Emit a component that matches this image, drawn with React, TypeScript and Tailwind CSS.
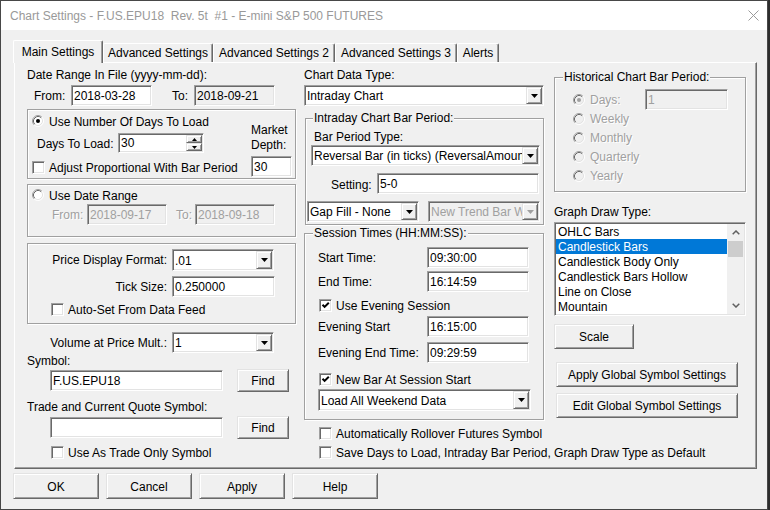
import React from "react";

const sunken =
  "border border-t-[#a0a0a0] border-l-[#a0a0a0] border-r-white border-b-white shadow-[inset_1px_1px_0_#696969,inset_-1px_-1px_0_#e3e3e3]";
const raised =
  "border border-t-[#e3e3e3] border-l-[#e3e3e3] border-r-[#696969] border-b-[#696969] shadow-[inset_1px_1px_0_#fff,inset_-1px_-1px_0_#a0a0a0]";
const disText = "text-[#a0a0a0] [text-shadow:1px_1px_0_#fff]";

function Edit({ cls, value = "", ro = false, dis = false }: { cls: string; value?: string; ro?: boolean; dis?: boolean }) {
  return (
    <div
      className={`${cls} ${sunken} ${ro || dis ? "bg-[#f0f0f0]" : "bg-white"} ${
        dis ? "text-[#a0a0a0]" : "text-black"
      } flex items-center pl-[2px] pt-[1px] whitespace-nowrap overflow-hidden shrink-0`}
    >
      {value}
    </div>
  );
}

function DownArrow({ dis = false }: { dis?: boolean }) {
  return (
    <svg width="7" height="4" viewBox="0 0 7 4">
      <polygon points="0,0 7,0 3.5,4" fill={dis ? "#a0a0a0" : "#000"} />
    </svg>
  );
}

function Combo({ cls, value, dis = false }: { cls: string; value: string; dis?: boolean }) {
  return (
    <div className={`${cls} ${sunken} ${dis ? "bg-[#f0f0f0] text-[#a0a0a0]" : "bg-white text-black"} flex shrink-0 p-[1px]`}>
      <div className="flex-1 flex items-center pl-[1px] pt-[1px] overflow-hidden whitespace-nowrap">{value}</div>
      <div className={`w-[16px] ${raised} bg-[#f0f0f0] flex items-center justify-center shrink-0`}>
        <DownArrow dis={dis} />
      </div>
    </div>
  );
}

function CheckBox({ checked = false, label, cls = "" }: { checked?: boolean; label: string; cls?: string }) {
  return (
    <div className={`flex items-center h-[14px] whitespace-nowrap ${cls}`}>
      <div className={`w-[13px] h-[13px] ${sunken} bg-white shrink-0 flex items-center justify-center`}>
        {checked && (
          <svg width="9" height="9" viewBox="0 0 9 9">
            <path d="M1.5 3.8 L3.6 5.9 L7.8 1.7" stroke="#000" strokeWidth="2" fill="none" />
          </svg>
        )}
      </div>
      <span className="ml-[4px] pt-[1px]">{label}</span>
    </div>
  );
}

function RadioDot({ checked = false, dis = false }: { checked?: boolean; dis?: boolean }) {
  return (
    <svg width="12" height="12" viewBox="0 0 12 12" className="shrink-0">
      <circle cx="6" cy="6" r="5" fill={dis ? "#f0f0f0" : "#fff"} />
      <path d="M2.11 9.89A5.5 5.5 0 0 1 9.89 2.11" stroke="#a0a0a0" fill="none" />
      <path d="M9.89 2.11A5.5 5.5 0 0 1 2.11 9.89" stroke="#fff" fill="none" />
      <path d="M2.82 9.18A4.5 4.5 0 0 1 9.18 2.82" stroke="#696969" fill="none" />
      <path d="M9.18 2.82A4.5 4.5 0 0 1 2.82 9.18" stroke="#e3e3e3" fill="none" />
      {checked && <circle cx="6" cy="6" r="2" fill={dis ? "#a0a0a0" : "#000"} />}
    </svg>
  );
}

function Btn({ cls, label }: { cls: string; label: string }) {
  return (
    <div className={`${cls} ${raised} bg-[#f0f0f0] flex items-center justify-center pt-[1px] shrink-0 whitespace-nowrap`}>{label}</div>
  );
}

function Group({ cls, title, tcls = "left-[7px]", children }: { cls: string; title?: string; tcls?: string; children?: React.ReactNode }) {
  return (
    <div className={`relative shrink-0 border border-[#a0a0a0] shadow-[inset_1px_1px_0_#fff,1px_1px_0_#fff] ${cls}`}>
      {title && (
        <span className={`absolute -top-[8px] ${tcls} bg-[#f0f0f0] px-[1px] leading-[14px] whitespace-nowrap`}>{title}</span>
      )}
      {children}
    </div>
  );
}

function Tab({ label, sel = false, cls }: { label: string; sel?: boolean; cls: string }) {
  return (
    <div
      className={`${cls} ${
        sel ? "h-[23px] -mb-[1px] relative z-10 bg-[#f0f0f0]" : "h-[19px]"
      } border-l border-t border-r border-l-white border-t-white border-r-[#696969] shadow-[inset_-1px_0_0_#a0a0a0] rounded-tl-[2px] rounded-tr-[2px] flex items-center justify-center whitespace-nowrap shrink-0`}
    >
      {label}
    </div>
  );
}

function LeftColumn() {
  return (
    <div className="flex flex-col w-[269px] shrink-0">
      <div className="mt-[5px] leading-[14px]">Date Range In File (yyyy-mm-dd):</div>
      <div className="mt-[3px] flex items-center h-[21px]">
        <span className="ml-[7px] w-[37px]">From:</span>
        <Edit cls="w-[81px] h-[21px]" value="2018-03-28" />
        <span className="ml-[20px] w-[22px]">To:</span>
        <Edit cls="w-[81px] h-[21px]" value="2018-09-21" ro />
      </div>

      <Group cls="mt-[3px] w-[269px] h-[70px] flex">
        <div className="w-[223px] pl-[4px] flex flex-col">
          <div className="mt-[4px] h-[14px] flex items-center">
            <RadioDot checked />
            <span className="ml-[5px] pt-[1px]">Use Number Of Days To Load</span>
          </div>
          <div className="mt-[5px] h-[20px] flex items-center">
            <span className="ml-[5px] w-[81px] pt-[2px]">Days To Load:</span>
            <div className={`w-[86px] h-[20px] ${sunken} bg-white flex p-[1px]`}>
              <div className="flex-1 flex items-center pl-[1px]">30</div>
              <div className="w-[16px] flex flex-col">
                <div className={`flex-1 ${raised} bg-[#f0f0f0] flex items-center justify-center`}>
                  <svg width="5" height="3" viewBox="0 0 5 3">
                    <polygon points="2.5,0 5,3 0,3" fill="#000" />
                  </svg>
                </div>
                <div className={`flex-1 ${raised} bg-[#f0f0f0] flex items-center justify-center`}>
                  <svg width="5" height="3" viewBox="0 0 5 3">
                    <polygon points="0,0 5,0 2.5,3" fill="#000" />
                  </svg>
                </div>
              </div>
            </div>
          </div>
          <CheckBox cls="mt-[7px]" label="Adjust Proportional With Bar Period" />
        </div>
        <div className="flex flex-col">
          <div className="mt-[13px] leading-[15px]">
            Market
            <br />
            Depth:
          </div>
          <Edit cls="mt-[3px] w-[41px] h-[21px]" value="30" />
        </div>
      </Group>

      <Group cls="mt-[5px] w-[269px] h-[53px]">
        <div className="pl-[4px] flex flex-col">
          <div className="mt-[3px] h-[14px] flex items-center">
            <RadioDot />
            <span className="ml-[5px] pt-[1px]">Use Date Range</span>
          </div>
          <div className="mt-[2px] h-[21px] flex items-center">
            <span className={`ml-[20px] w-[35px] ${disText}`}>From:</span>
            <Edit cls="w-[80px] h-[21px]" value="2018-09-17" dis />
            <span className={`ml-[9px] w-[19px] ${disText}`}>To:</span>
            <Edit cls="w-[80px] h-[21px]" value="2018-09-18" dis />
          </div>
        </div>
      </Group>

      <Group cls="mt-[6px] w-[269px] h-[81px]">
        <div className="flex flex-col">
          <div className="mt-[5px] h-[22px] flex items-center">
            <span className="w-[139px] text-right">Price Display Format:</span>
            <Combo cls="ml-[5px] w-[102px] h-[22px]" value=".01" />
          </div>
          <div className="mt-[5px] h-[21px] flex items-center">
            <span className="w-[139px] text-right">Tick Size:</span>
            <Edit cls="ml-[5px] w-[103px] h-[21px]" value="0.250000" />
          </div>
          <CheckBox cls="mt-[5px] ml-[23px]" label="Auto-Set From Data Feed" />
        </div>
      </Group>

      <div className="mt-[8px] h-[21px] flex items-center">
        <span className="w-[140px] text-right">Volume at Price Mult.:</span>
        <Combo cls="ml-[5px] w-[102px] h-[21px]" value="1" />
      </div>
      <div className="leading-[14px] pt-[1px]">Symbol:</div>
      <div className="mt-[1px] h-[23px] flex items-center">
        <Edit cls="ml-[23px] w-[173px] h-[21px]" value="F.US.EPU18" />
        <Btn cls="ml-[14px] w-[52px] h-[23px]" label="Find" />
      </div>
      <div className="mt-[8px] leading-[14px]">Trade and Current Quote Symbol:</div>
      <div className="mt-[2px] h-[23px] flex items-center">
        <Edit cls="ml-[23px] w-[173px] h-[21px]" />
        <Btn cls="ml-[14px] w-[52px] h-[23px]" label="Find" />
      </div>
      <CheckBox cls="mt-[6px] ml-[24px]" label="Use As Trade Only Symbol" />
    </div>
  );
}

function TimeRow({ label, value, cls }: { label: string; value: string; cls: string }) {
  return (
    <div className={`${cls} h-[21px] flex items-center`}>
      <span className="ml-[13px] w-[109px] pt-[1px]">{label}</span>
      <Edit cls="w-[102px] h-[21px]" value={value} />
    </div>
  );
}

function MiddleColumn() {
  return (
    <div className="ml-[8px] flex flex-col w-[241px] shrink-0">
      <div className="mt-[5px] leading-[14px]">Chart Data Type:</div>
      <Combo cls="mt-[3px] w-[240px] h-[21px]" value="Intraday Chart" />

      <Group cls="mt-[12px] ml-[1px] w-[239px] h-[107px]" title="Intraday Chart Bar Period:">
        <div className="flex flex-col">
          <div className="mt-[11px] ml-[8px] leading-[14px]">Bar Period Type:</div>
          <Combo cls="mt-[1px] ml-[5px] w-[229px] h-[21px]" value="Reversal Bar (in ticks) (ReversalAmount)" />
          <div className="mt-[7px] h-[21px] flex items-center">
            <span className="ml-[25px] w-[46px] pt-[2px]">Setting:</span>
            <Edit cls="w-[162px] h-[21px]" value="5-0" />
          </div>
          <div className="mt-[7px] h-[21px] flex items-center">
            <Combo cls="ml-[1px] w-[112px] h-[21px]" value="Gap Fill - None" />
            <Combo cls="ml-[9px] w-[112px] h-[21px]" value="New Trend Bar When Exceeded" dis />
          </div>
        </div>
      </Group>

      <Group cls="mt-[8px] w-[240px] h-[187px]" title="Session Times (HH:MM:SS):" tcls="left-[8px]">
        <div className="flex flex-col">
          <TimeRow cls="mt-[13px]" label="Start Time:" value="09:30:00" />
          <TimeRow cls="mt-[3px]" label="End Time:" value="16:14:59" />
          <CheckBox cls="mt-[6px] ml-[14px]" checked label="Use Evening Session" />
          <TimeRow cls="mt-[4px]" label="Evening Start" value="16:15:00" />
          <TimeRow cls="mt-[5px]" label="Evening End Time:" value="09:29:59" />
          <CheckBox cls="mt-[9px] ml-[14px]" checked label="New Bar At Session Start" />
          <Combo cls="mt-[3px] ml-[13px] w-[213px] h-[22px]" value="Load All Weekend Data" />
        </div>
      </Group>

      <CheckBox cls="mt-[6px] ml-[15px]" label="Automatically Rollover Futures Symbol" />
      <CheckBox cls="mt-[5px] ml-[15px]" label="Save Days to Load, Intraday Bar Period, Graph Draw Type as Default" />
    </div>
  );
}

function HistRadio({ label, checked = false, children }: { label: string; checked?: boolean; children?: React.ReactNode }) {
  return (
    <div className="h-[19px] flex items-center">
      <div className="ml-[18px]">
        <RadioDot checked={checked} dis />
      </div>
      <span className={`ml-[5px] pt-[1px] ${children ? "w-[55px]" : ""} ${disText}`}>{label}</span>
      {children}
    </div>
  );
}

const drawTypes = [
  "OHLC Bars",
  "Candlestick Bars",
  "Candlestick Body Only",
  "Candlestick Bars Hollow",
  "Line on Close",
  "Mountain",
];

function RightColumn() {
  return (
    <div className="ml-[9px] flex flex-col w-[192px] shrink-0">
      <Group cls="mt-[14px] w-[192px] h-[115px]" title="Historical Chart Bar Period:" tcls="left-[8px]">
        <div className="mt-[12px] flex flex-col">
          <HistRadio label="Days:" checked>
            <Edit cls="w-[83px] h-[21px]" value="1" dis />
          </HistRadio>
          <HistRadio label="Weekly" />
          <HistRadio label="Monthly" />
          <HistRadio label="Quarterly" />
          <HistRadio label="Yearly" />
        </div>
      </Group>

      <div className="mt-[13px] leading-[14px]">Graph Draw Type:</div>
      <div className={`mt-[3px] w-[192px] h-[94px] ${sunken} bg-white flex p-[1px]`}>
        <div className="flex-1 flex flex-col">
          {drawTypes.map((t, i) => (
            <div
              key={t}
              className={`h-[15px] leading-[17px] pl-[2px] whitespace-nowrap ${i === 1 ? "bg-[#0078d7] text-white" : ""}`}
            >
              {t}
            </div>
          ))}
        </div>
        <div className="w-[17px] bg-[#f0f0f0] flex flex-col">
          <div className="h-[17px] flex items-center justify-center">
            <svg width="8" height="5" viewBox="0 0 8 5">
              <polyline points="0.7,4.3 4,1 7.3,4.3" stroke="#606060" strokeWidth="1.5" fill="none" />
            </svg>
          </div>
          <div className="h-[16px] mx-[1px] bg-[#cdcdcd]" />
          <div className="flex-1" />
          <div className="h-[17px] flex items-center justify-center">
            <svg width="8" height="5" viewBox="0 0 8 5">
              <polyline points="0.7,0.7 4,4 7.3,0.7" stroke="#606060" strokeWidth="1.5" fill="none" />
            </svg>
          </div>
        </div>
      </div>

      <Btn cls="mt-[8px] w-[80px] h-[25px]" label="Scale" />
      <Btn cls="mt-[13px] ml-[2px] w-[182px] h-[25px]" label="Apply Global Symbol Settings" />
      <Btn cls="mt-[6px] ml-[2px] w-[182px] h-[25px]" label="Edit Global Symbol Settings" />
    </div>
  );
}

export default function App() {
  return (
    <div className="w-[770px] h-[510px] bg-[#2d2d2d] overflow-hidden font-['Liberation_Sans',Arial,sans-serif] text-[12px] leading-[14px] text-black">
      <div className="w-[768px] h-[510px] bg-[#f0f0f0] border border-[#474747] flex flex-col">
        <div className="h-[29px] bg-white flex items-center justify-between shrink-0">
          <span className="ml-[9px] whitespace-pre text-[#999999] text-[12px]">
            Chart Settings - F.US.EPU18  Rev. 5t  #1 - E-mini S&amp;P 500 FUTURES
          </span>
          <svg className="mr-[8px]" width="11" height="11" viewBox="0 0 11 11">
            <path d="M0.5 0.5 L10.5 10.5 M10.5 0.5 L0.5 10.5" stroke="#9a9a9a" strokeWidth="1" fill="none" />
          </svg>
        </div>

        <div className="mt-[10px] ml-[12px] flex items-end">
          <Tab cls="w-[90px]" sel label="Main Settings" />
          <Tab cls="w-[110px]" label="Advanced Settings" />
          <Tab cls="w-[122px]" label="Advanced Settings 2" />
          <Tab cls="w-[122px]" label="Advanced Settings 3" />
          <Tab cls="w-[42px]" label="Alerts" />
        </div>

        <div className="ml-[13px] w-[743px] h-[407px] shrink-0 border border-t-white border-l-white border-r-[#696969] border-b-[#696969] shadow-[inset_-1px_-1px_0_#a0a0a0] flex pl-[12px]">
          <LeftColumn />
          <MiddleColumn />
          <RightColumn />
        </div>

        <div className="mt-[4px] ml-[12px] flex gap-[7px]">
          <Btn cls="w-[86px] h-[26px]" label="OK" />
          <Btn cls="w-[86px] h-[26px]" label="Cancel" />
          <Btn cls="w-[86px] h-[26px]" label="Apply" />
          <Btn cls="w-[86px] h-[26px]" label="Help" />
        </div>
      </div>
    </div>
  );
}
